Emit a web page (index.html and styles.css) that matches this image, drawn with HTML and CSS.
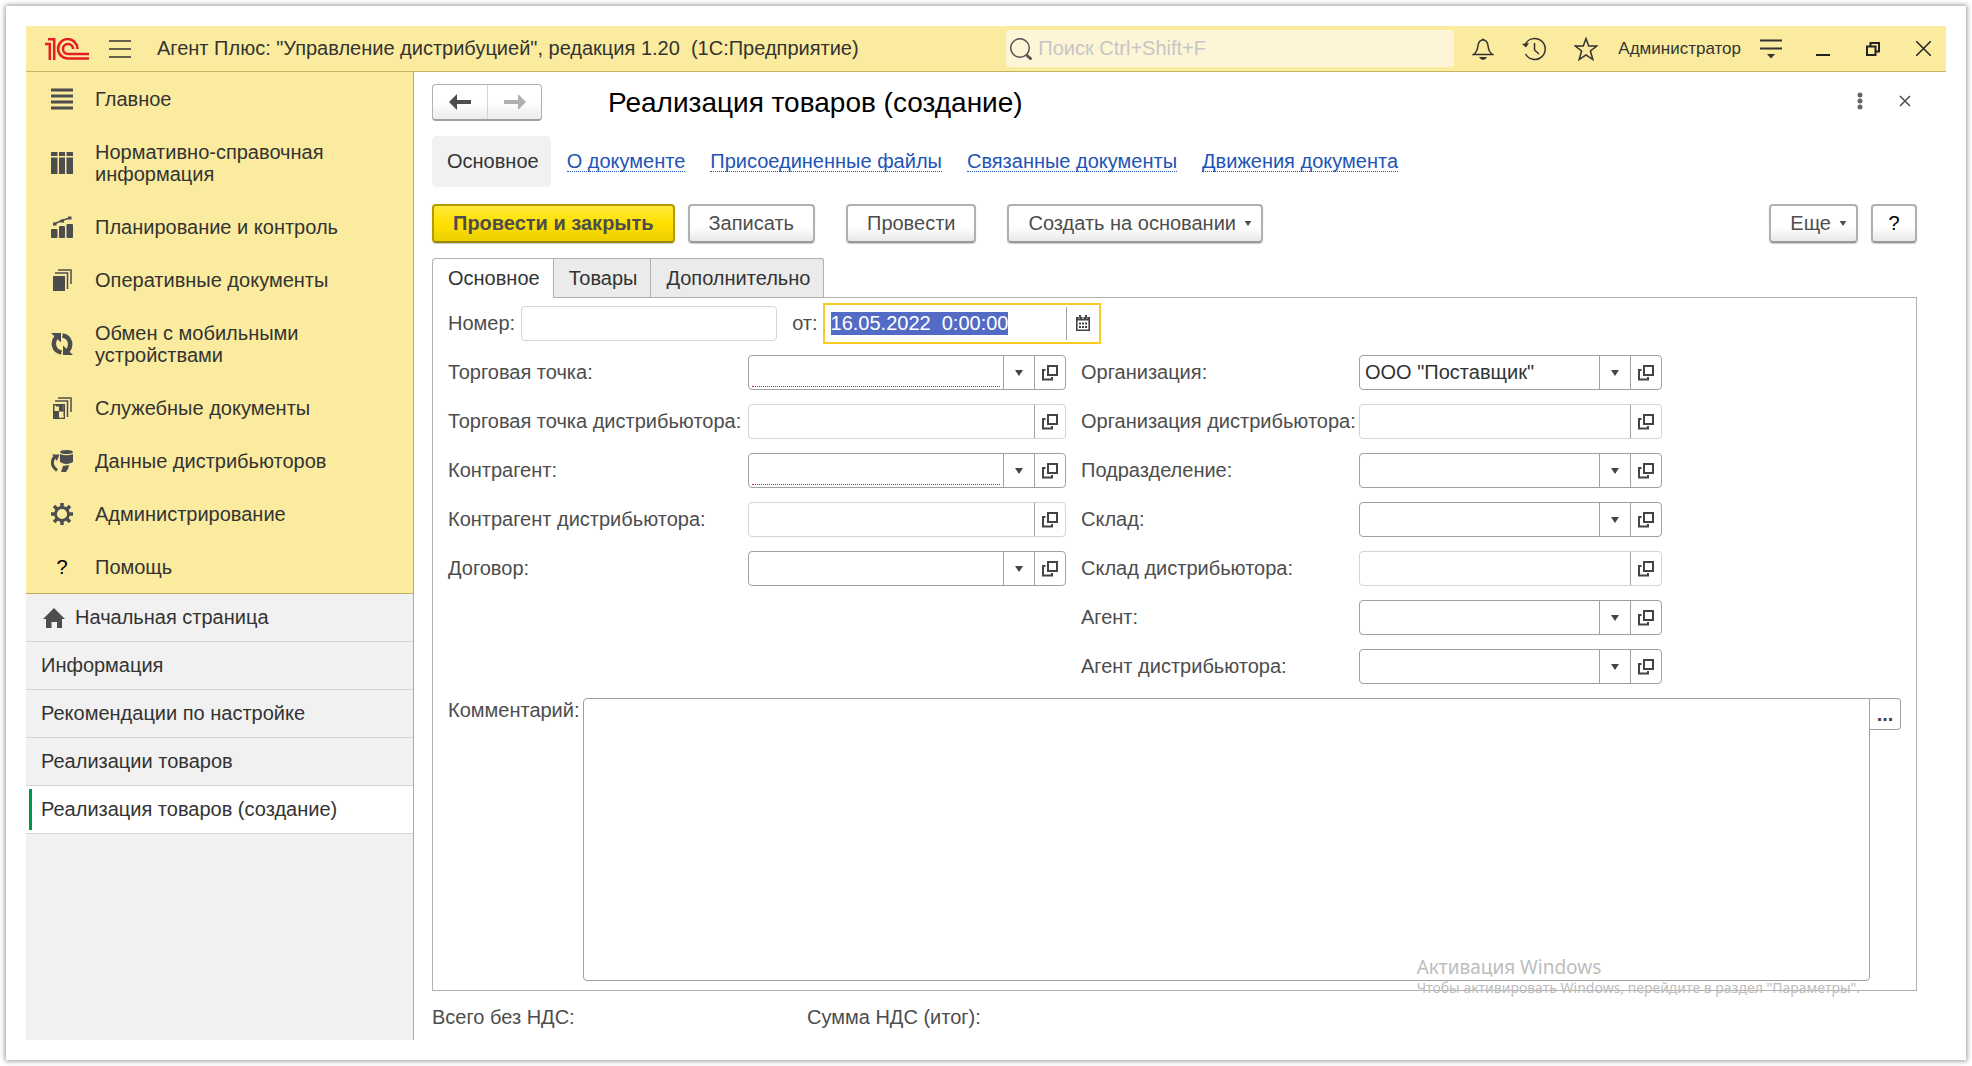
FILE: index.html
```html
<!DOCTYPE html>
<html lang="ru">
<head>
<meta charset="utf-8">
<meta name="viewport" content="width=device-width, initial-scale=1">
<title>Реализация товаров (создание)</title>
<link rel="stylesheet" href="styles.css">
</head>
<body>
<svg class="sprite" aria-hidden="true">
  <symbol id="i-open" viewBox="0 0 16 16"><path d="M6 1h9v9H6zM3.500 5H1v9.500h9V12" fill="none" stroke="currentColor" stroke-width="2"/></symbol>
  <symbol id="i-down" viewBox="0 0 8 6"><path d="M0 0h8L4 6z" fill="currentColor"/></symbol>
</svg>
<div class="sheet">
<div class="window">
  <header class="topbar">
    <svg class="logo" viewBox="0 0 44 22" role="img" aria-label="1С"><g fill="none" stroke="#e31e24" stroke-width="2.500"><path d="M0 6h4.800v16M3 1.300h6.200V22"/><path d="M32.500 11A9.700 9.700 0 1 0 23 20.500H44"/><path d="M28 11A5 5 0 1 0 23 16H44"/></g></svg>
    <button class="icon-btn" aria-label="Меню"><svg width="22" height="18" viewBox="0 0 22 18"><path d="M0 1h22M0 9h22M0 17h22" stroke="#333" stroke-width="1.500"/></svg></button>
    <div class="app-title">Агент Плюс: "Управление дистрибуцией", редакция 1.20&nbsp; (1С:Предприятие)</div>
    <div class="search">
      <svg width="22" height="22" viewBox="0 0 22 22" fill="none" stroke="#555"><circle cx="10" cy="10" r="9.300" stroke-width="1.500"/><path d="M16.500 17l5 4.500" stroke-width="3"/></svg>
      <input type="search" aria-label="Поиск" placeholder="Поиск Ctrl+Shift+F">
    </div>
    <div class="tools">
      <button class="icon-btn" aria-label="Уведомления"><svg width="22" height="24" viewBox="0 0 22 24"><path d="M1.500 17.500c3-2 4-4 4.500-9C6.500 5 8.500 3 11 3s4.500 2 5 5.500c.5 5 1.500 7 4.500 9z" fill="none" stroke="#333" stroke-width="1.500"/><path d="M9.500 3a1.500 1.500 0 0 1 3 0zM7 20h8q-1.500 3-4 3t-4-3z" fill="#333"/></svg></button>
      <button class="icon-btn" aria-label="История"><svg width="24" height="24" viewBox="0 0 24 24"><path d="M3 8A10.500 10.500 0 1 1 3.500 17" fill="none" stroke="#333" stroke-width="1.500"/><path d="M0 7l7-1-3 4.500z" fill="#333"/><path d="M12.500 6v7l4.500 4" fill="none" stroke="#333" stroke-width="1.500"/></svg></button>
      <button class="icon-btn" aria-label="Избранное"><svg width="24" height="24" viewBox="0 0 24 24"><path d="M12 1.500l2.700 7.500h8.100l-6.400 5 2.400 8.500-6.800-4.700-6.800 4.700 2.400-8.500L1.200 9h8.100z" fill="none" stroke="#333" stroke-width="1.500"/></svg></button>
    </div>
    <div class="user">Администратор</div>
    <button class="icon-btn" aria-label="Настройки"><svg width="22" height="20" viewBox="0 0 22 20"><path d="M0 1.500h22M0 9.500h22" stroke="#333" stroke-width="2"/><path d="M7 15h8l-4 4.500z" fill="#333"/></svg></button>
    <div class="window-tools">
      <button class="icon-btn" aria-label="Свернуть"><svg width="14" height="14" viewBox="0 0 14 14"><path d="M0 13h14" stroke="#222" stroke-width="2"/></svg></button>
      <button class="icon-btn" aria-label="Восстановить"><svg width="14" height="14" viewBox="0 0 14 14"><path d="M1 4.500h8.500V13H1zM4.500 4V1H13v8.500h-3" fill="none" stroke="#222" stroke-width="2"/></svg></button>
      <button class="icon-btn" aria-label="Закрыть"><svg width="15" height="15" viewBox="0 0 15 15"><path d="M0 0l15 15M15 0L0 15" stroke="#222" stroke-width="1.500"/></svg></button>
    </div>
  </header>

  <div class="body">
    <aside class="sidebar">
      <nav class="sections" aria-label="Разделы">
        <a href="#"><svg viewBox="0 0 22 22"><path d="M0 2h22M0 8h22M0 14h22M0 20h22" stroke="#4d4d4d" stroke-width="3"/></svg><span>Главное</span></a>
        <a href="#"><svg viewBox="0 0 22 22" fill="#4d4d4d"><path d="M0 0h6.500v4H0zM8 0h6v4H8zM15.500 0H22v4h-6.500zM0 5.500h6.500V22H0zM8 5.500h6V22H8zM15.500 5.500H22V22h-6.500z"/></svg><span>Нормативно-справочная информация</span></a>
        <a href="#"><svg viewBox="0 0 22 22" fill="#4d4d4d"><rect x="0" y="13" width="6.500" height="9" rx="1"/><rect x="8" y="10" width="6" height="12" rx="1"/><rect x="15.500" y="8" width="6.500" height="14" rx="1"/><path d="M3 8l8-3.500L18.500 2" fill="none" stroke="#4d4d4d" stroke-width="1.500"/><path d="M2 6.500h3.500v3H2zM9.500 3.500H13v3H9.500zM17 .5h3.500v3H17z"/></svg><span>Планирование и контроль</span></a>
        <a href="#"><svg viewBox="0 0 22 22"><path d="M2 7h12v15H2z" fill="#4d4d4d"/><path d="M4 4h12.500v16M7 1h13v14" fill="none" stroke="#4d4d4d" stroke-width="1.500"/></svg><span>Оперативные документы</span></a>
        <a href="#"><svg viewBox="0 0 22 22"><path d="M10.500 19.500C2 18 1 9 5.500 4M11.500 2.500C20 4 21 13 16.500 18" fill="none" stroke="#4d4d4d" stroke-width="4.500"/><path d="M0 0h10v9.500zM22 22H12v-9.500z" fill="#4d4d4d"/></svg><span>Обмен с мобильными устройствами</span></a>
        <a href="#"><svg viewBox="0 0 22 22"><path d="M2 7h12v15H2z" fill="#4d4d4d"/><path d="M8 8.500h4.500v5H8zM3.500 8.500H5V13H3.500zM8 19h4.500v1.500H8zM3.500 9.500H8v4.500H3.500zM8 14v0z" fill="#fbeb9e"/><path d="M8 8h4.500v6H8z" fill="#4d4d4d"/><path d="M8 14.500h4.500v6H8z" fill="#fbeb9e"/><path d="M4 4h12.500v16M7 1h13v14" fill="none" stroke="#4d4d4d" stroke-width="1.500"/></svg><span>Служебные документы</span></a>
        <a href="#"><svg viewBox="0 0 22 22" fill="#4d4d4d"><ellipse cx="15.500" cy="2" rx="6.500" ry="2"/><path d="M9 4q6.500 2.500 13 0v8q-6.500 4-13 0z"/><path d="M6 20.500Q-2 14 3.500 7" fill="none" stroke="#4d4d4d" stroke-width="3"/><path d="M1 4.500h7.500L6 11zM18 15l-1 4-2 3h-5l2-6z"/></svg><span>Данные дистрибьюторов</span></a>
        <a href="#"><svg viewBox="0 0 22 22" fill="none" stroke="#4d4d4d"><circle cx="11" cy="11" r="6.500" stroke-width="2.800"/><path d="M11 0v4M11 18v4M0 11h4M18 11h4M3 3l3 3M16 16l3 3M3 19l3-3M16 6l3-3" stroke-width="3.500"/></svg><span>Администрирование</span></a>
        <a href="#"><b class="q">?</b><span>Помощь</span></a>
      </nav>
      <nav class="open-forms" aria-label="Открытые формы">
        <a href="#"><svg width="22" height="20" viewBox="0 0 22 20"><path d="M11 0l11 11h-3v9h-5v-6H8.500v6H3v-9H0z" fill="#4d4d4d"/></svg>Начальная страница</a>
        <a href="#">Информация</a>
        <a href="#">Рекомендации по настройке</a>
        <a href="#">Реализации товаров</a>
        <a href="#" class="current" aria-current="page">Реализация товаров (создание)</a>
      </nav>
    </aside>

    <main class="main">
      <div class="heading">
        <div class="history">
          <button aria-label="Назад"><svg width="22" height="16" viewBox="0 0 22 16"><path d="M8 0v6h14v4H8v6L0 8z" fill="#4d4d4d"/></svg></button>
          <button aria-label="Вперед"><svg width="22" height="16" viewBox="0 0 22 16"><path d="M14 0v6H0v4h14v6l8-8z" fill="#b0b0b0"/></svg></button>
        </div>
        <h1>Реализация товаров (создание)</h1>
        <button class="icon-btn" aria-label="Действия"><svg width="6" height="18" viewBox="0 0 6 18" fill="#666"><circle cx="3" cy="3" r="2.500"/><circle cx="3" cy="9" r="2.500"/><circle cx="3" cy="15" r="2.500"/></svg></button>
        <button class="icon-btn" aria-label="Закрыть форму"><svg width="12" height="12" viewBox="0 0 12 12"><path d="M1 1l10 10M11 1L1 11" stroke="#4d4d4d" stroke-width="1.500"/></svg></button>
      </div>

      <nav class="links" aria-label="Навигация формы">
        <span class="here">Основное</span>
        <a href="#">О документе</a>
        <a href="#">Присоединенные файлы</a>
        <a href="#">Связанные документы</a>
        <a href="#">Движения документа</a>
      </nav>

      <div class="commands">
        <button class="btn primary">Провести и закрыть</button>
        <button class="btn">Записать</button>
        <button class="btn spaced">Провести</button>
        <button class="btn spaced menu">Создать на основании<svg width="8" height="5"><use href="#i-down"/></svg></button>
        <button class="btn menu more">Еще<svg width="8" height="5"><use href="#i-down"/></svg></button>
        <button class="btn help" aria-label="Справка">?</button>
      </div>

      <div class="tabs" role="tablist">
        <button role="tab" aria-selected="true">Основное</button>
        <button role="tab" aria-selected="false">Товары</button>
        <button role="tab" aria-selected="false">Дополнительно</button>
      </div>

      <form class="panel">
        <div class="number-row">
          <label for="num">Номер:</label>
          <input id="num" class="number" type="text" readonly>
          <label for="date">от:</label>
          <div class="date"><input id="date" type="text" value="16.05.2022  0:00:00"><button type="button" aria-label="Выбрать дату"><svg width="14" height="16" viewBox="0 0 14 16"><path d="M.8 3h12.400v12.200H.8z" fill="none" stroke="#444" stroke-width="1.600"/><path d="M0 2h14v3.500H0zM3 0h2v3H3zM9 0h2v3H9z" fill="#444"/><path d="M2.500 3h1M6 3h2M10.500 3h1" stroke="#fff"/><path d="M3 7.500h2v2H3zM6 7.500h2v2H6zM9 7.500h2v2H9zM3 11h2v2H3zM6 11h2v2H6zM9 11h2v2H9z" fill="#444"/></svg></button></div>
        </div>

        <div class="columns">
          <div class="fields left">
            <label for="f1">Торговая точка:</label>
            <div class="field required"><input id="f1" type="text"><button type="button" aria-label="Список"><svg width="8" height="6"><use href="#i-down"/></svg></button><button type="button" aria-label="Открыть"><svg width="16" height="16"><use href="#i-open"/></svg></button></div>
            <label for="f2">Торговая точка дистрибьютора:</label>
            <div class="field locked"><input id="f2" type="text" readonly><button type="button" aria-label="Открыть"><svg width="16" height="16"><use href="#i-open"/></svg></button></div>
            <label for="f3">Контрагент:</label>
            <div class="field required"><input id="f3" type="text"><button type="button" aria-label="Список"><svg width="8" height="6"><use href="#i-down"/></svg></button><button type="button" aria-label="Открыть"><svg width="16" height="16"><use href="#i-open"/></svg></button></div>
            <label for="f4">Контрагент дистрибьютора:</label>
            <div class="field locked"><input id="f4" type="text" readonly><button type="button" aria-label="Открыть"><svg width="16" height="16"><use href="#i-open"/></svg></button></div>
            <label for="f5">Договор:</label>
            <div class="field"><input id="f5" type="text"><button type="button" aria-label="Список"><svg width="8" height="6"><use href="#i-down"/></svg></button><button type="button" aria-label="Открыть"><svg width="16" height="16"><use href="#i-open"/></svg></button></div>
          </div>
          <div class="fields right">
            <label for="g1">Организация:</label>
            <div class="field"><input id="g1" type="text" value="ООО &quot;Поставщик&quot;"><button type="button" aria-label="Список"><svg width="8" height="6"><use href="#i-down"/></svg></button><button type="button" aria-label="Открыть"><svg width="16" height="16"><use href="#i-open"/></svg></button></div>
            <label for="g2">Организация дистрибьютора:</label>
            <div class="field locked"><input id="g2" type="text" readonly><button type="button" aria-label="Открыть"><svg width="16" height="16"><use href="#i-open"/></svg></button></div>
            <label for="g3">Подразделение:</label>
            <div class="field"><input id="g3" type="text"><button type="button" aria-label="Список"><svg width="8" height="6"><use href="#i-down"/></svg></button><button type="button" aria-label="Открыть"><svg width="16" height="16"><use href="#i-open"/></svg></button></div>
            <label for="g4">Склад:</label>
            <div class="field"><input id="g4" type="text"><button type="button" aria-label="Список"><svg width="8" height="6"><use href="#i-down"/></svg></button><button type="button" aria-label="Открыть"><svg width="16" height="16"><use href="#i-open"/></svg></button></div>
            <label for="g5">Склад дистрибьютора:</label>
            <div class="field locked"><input id="g5" type="text" readonly><button type="button" aria-label="Открыть"><svg width="16" height="16"><use href="#i-open"/></svg></button></div>
            <label for="g6">Агент:</label>
            <div class="field"><input id="g6" type="text"><button type="button" aria-label="Список"><svg width="8" height="6"><use href="#i-down"/></svg></button><button type="button" aria-label="Открыть"><svg width="16" height="16"><use href="#i-open"/></svg></button></div>
            <label for="g7">Агент дистрибьютора:</label>
            <div class="field"><input id="g7" type="text"><button type="button" aria-label="Список"><svg width="8" height="6"><use href="#i-down"/></svg></button><button type="button" aria-label="Открыть"><svg width="16" height="16"><use href="#i-open"/></svg></button></div>
          </div>
        </div>

        <div class="comment">
          <label for="note">Комментарий:</label>
          <textarea id="note"></textarea>
          <button type="button" aria-label="Открыть комментарий">...</button>
        </div>
        <div class="activation">
          <p class="activation-title">Активация Windows</p>
          <p>Чтобы активировать Windows, перейдите в раздел "Параметры".</p>
        </div>
      </form>

      <div class="totals"><span>Всего без НДС:</span><span>Сумма НДС (итог):</span></div>
    </main>
  </div>
</div>
</div>
<script src="script.js"></script>
</body>
</html>
```
FILE: styles.css
```css
* { box-sizing: border-box; }
body {
  margin: 0;
  background: #fff;
  color: #333;
  font: 20px/23px "Liberation Sans", Arial, sans-serif;
}
button, input, textarea { font: inherit; color: inherit; margin: 0; }
button { padding: 0; background: none; border: 0; }
input, textarea { outline: 0; min-width: 0; }
svg { flex: none; display: block; }
a { color: inherit; text-decoration: none; }
.sprite { position: absolute; width: 0; height: 0; }

.sheet { min-height: 100vh; padding: 6px; display: flex; }
.window {
  flex: 1;
  min-width: 0;
  padding: 20px;
  display: flex;
  flex-direction: column;
  background: #fff;
  box-shadow: 0 0 5px 1px #999;
}

/* Title bar */
.topbar {
  height: 46px;
  padding: 0 15px 0 19px;
  display: flex;
  align-items: center;
  background: #fbeb9e;
  border-bottom: 1px solid #c4b560;
}
.icon-btn { display: flex; align-items: center; justify-content: center; }
.logo { width: 44px; height: 22px; margin-right: 20px; }
.app-title { margin-left: 26px; flex: 1; white-space: nowrap; }
.search {
  flex: 0 1 448px;
  height: 37px;
  padding-left: 4px;
  display: flex;
  align-items: center;
  gap: 6px;
  background: #fdf5d6;
  border-radius: 3px;
}
.search input { flex: 1; padding: 0; border: 0; background: none; }
.search input::placeholder { color: #c6c6c6; opacity: 1; }
.tools { display: flex; gap: 28px; margin: 0 20px 0 18px; }
.user { font-size: 17px; margin-right: 19px; }
.window-tools { display: flex; gap: 36px; margin-left: 34px; }

.body { flex: 1; display: flex; }

/* Sidebar */
.sidebar {
  flex: 0 0 388px;
  background: #f1f1f1;
  border-right: 1px solid #b9b06a;
}
.sections { background: #fbeb9e; border-bottom: 1px solid #bdae58; line-height: 22px; }
.sections a {
  padding: 16px 60px 15px 25px;
  display: flex;
  align-items: center;
  gap: 22px;
}
.sections svg, .q { flex: 0 0 22px; width: 22px; height: 22px; }
.q { font-weight: normal; color: #000; text-align: center; }
.open-forms a {
  height: 48px;
  padding-left: 15px;
  display: flex;
  align-items: center;
  gap: 10px;
  border-bottom: 1px solid #d6d6d6;
}
.open-forms a:first-child { padding-left: 17px; }
.open-forms .current { padding-left: 3px; gap: 9px; background: #fff; }
.open-forms .current::before { content: ""; width: 3px; height: 41px; background: #009846; }

/* Form header */
.main {
  flex: 1;
  min-width: 0;
  padding: 12px 29px 11px 18px;
  display: flex;
  flex-direction: column;
}
.heading { display: flex; align-items: center; height: 37px; padding-right: 6px; gap: 36px; }
.heading .icon-btn { padding-bottom: 4px; }
.history {
  display: flex;
  height: 37px;
  border: 1px solid #b0b0b0;
  border-bottom: 2px solid #a0a0a0;
  border-radius: 4px;
  background: linear-gradient(#fff 50%, #ececec);
}
.history button { width: 54px; display: flex; align-items: center; justify-content: center; }
.history button + button { border-left: 1px solid #d4d4d4; }
h1 { flex: 1; margin: 0 0 0 30px; font-size: 28px; font-weight: normal; line-height: 32px; color: #000; }

.links { margin-top: 15px; display: flex; align-items: center; gap: 25px; }
.here { padding: 14px 12px 14px 15px; margin-right: -9px; background: #f1f1f1; border-radius: 5px; }
.links a { color: #1e54b5; border-bottom: 1px dotted #1e54b5; line-height: 19px; }

/* Commands */
.commands { margin-top: 17px; display: flex; gap: 13px; }
.btn {
  height: 39px;
  padding: 0 19px;
  display: flex;
  align-items: center;
  justify-content: center;
  color: #4d4d4d;
  background: linear-gradient(#fff 60%, #e8e8e8);
  border: 2px solid #b0b0b0;
  border-bottom-color: #999;
  border-radius: 4px;
  box-shadow: 0 1px 1px #ccc;
}
.primary {
  font-weight: bold;
  background: linear-gradient(#ffea3c, #ffe000 50%, #ebd000);
  border-color: #b29d00;
  border-bottom-color: #9a8700;
}
.spaced { margin-left: 18px; }
.menu { gap: 8px; padding-right: 9px; }
.more { margin-left: auto; }
.help { width: 46px; padding: 0; color: #000; }

/* Form pages */
.tabs { margin-top: 15px; display: flex; }
.tabs button {
  height: 39px;
  padding: 0 13px 0 15px;
  background: #ebebeb;
  border: 1px solid #b0b0b0;
  border-bottom: 0;
  border-left-width: 0;
}
.tabs button:first-child { border-left-width: 1px; border-radius: 4px 0 0; }
.tabs button:last-child { border-radius: 0 3px 0 0; }
.tabs button[aria-selected="true"] { height: 40px; margin-bottom: -1px; background: #fff; z-index: 1; }
.panel {
  flex: 1;
  padding: 4px 15px 9px;
  display: flex;
  flex-direction: column;
  border: 1px solid #b0b0b0;
  position: relative;
}
label, .totals { color: #4d4d4d; }
.number-row { display: flex; align-items: center; height: 42px; }
.number { width: 256px; height: 35px; margin: 0 15px 0 6px; border: 1px solid #d4d4d4; border-radius: 4px; }
.date {
  width: 278px;
  height: 41px;
  margin-left: 5px;
  padding: 2px 0;
  display: flex;
  border: 2px solid #fbcb24;
}
.date input { flex: 1; padding: 0 6px; border: 0; color: #333; }
.date input::selection { background: #536bc4; color: #fff; }
.date button { width: 33px; display: flex; align-items: center; justify-content: center; border-left: 1px solid #a0a0a0; }

.columns { margin-top: 11px; display: flex; gap: 15px; }
.fields { display: grid; grid-auto-rows: 35px; row-gap: 14px; align-items: center; align-content: start; }
.left { grid-template-columns: 300px 318px; }
.right { grid-template-columns: 278px 303px; }
.field { height: 35px; display: flex; border: 1px solid #a0a0a0; border-radius: 4px; }
.field input { flex: 1; padding: 0 5px; border: 0; background: none; }
.field button {
  width: 31px;
  display: flex;
  align-items: center;
  justify-content: center;
  color: #444;
  border-left: 1px solid #a0a0a0;
}
.locked { border-color: #d4d4d4; }
.required input { height: 31px; margin: 0 3px; border-bottom: 1px dotted #e02020; }

.comment { flex: 1; margin-top: 14px; min-height: 200px; display: flex; align-items: flex-start; }
.comment label { width: 135px; padding-top: 1px; }
.comment textarea { flex: 1; align-self: stretch; resize: none; border: 1px solid #a0a0a0; border-radius: 4px 0 4px 4px; }
.comment button {
  width: 31px;
  height: 32px;
  font-weight: bold;
  color: #444;
  border: 1px solid #a0a0a0;
  border-left: 0;
  border-radius: 0 4px 4px 0;
}
.totals { padding-top: 15px; display: flex; }
.totals span { width: 375px; }

/* System watermark over the lower corner */
.activation {
  position: absolute;
  right: 56px;
  bottom: -7px;
  color: #bdbdbd;
  font: 14px/18px "Noto Sans", "Open Sans", sans-serif;
  pointer-events: none;
}
.activation p { margin: 0; }
.activation .activation-title { font-size: 19px; line-height: 24px; }
```
FILE: script.js
```js
const date = document.getElementById('date');
date.focus();
date.select();
```
